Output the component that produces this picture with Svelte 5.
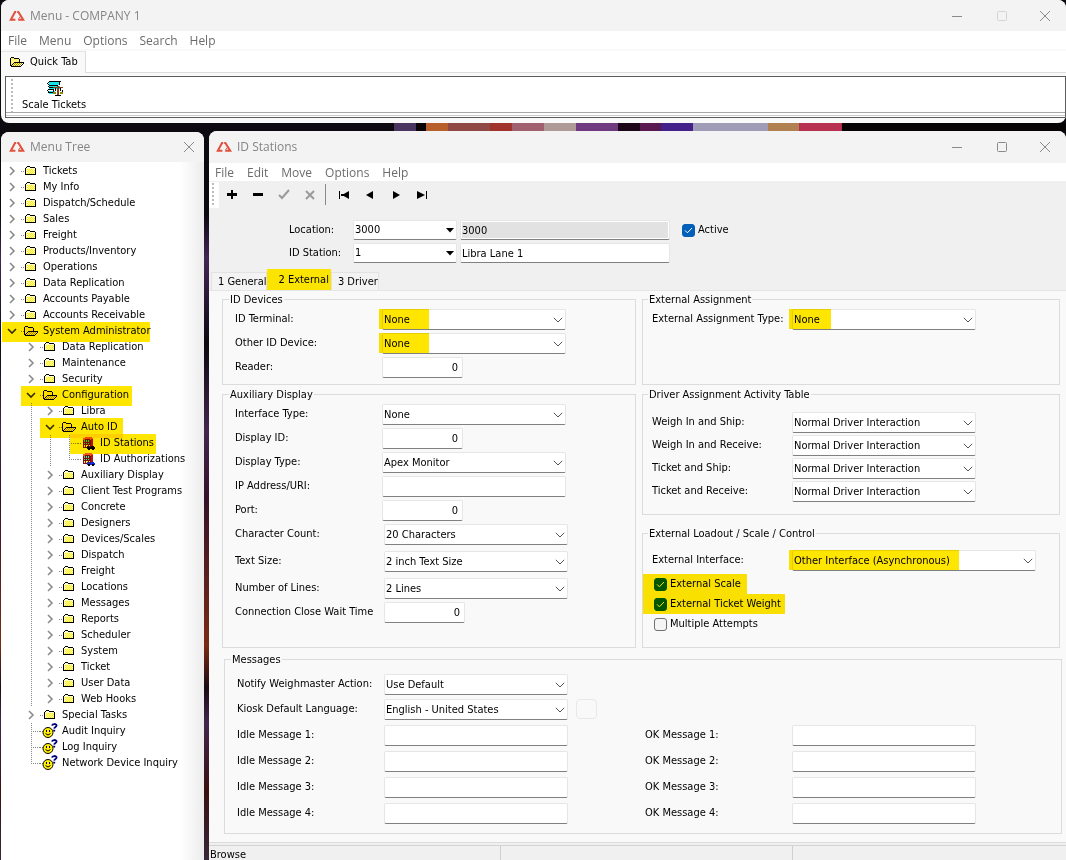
<script lang="ts">
  type Node = {
    label: string;
    level: number;
    kind: "closed" | "open" | "station" | "auth" | "inquiry";
    mark?: number;
    last?: boolean;
  };

  const closed = (level: number, names: string[]): Node[] =>
    names.map((label) => ({ label, level, kind: "closed" }));

  const tree: Node[] = [
    ...closed(0, [
      "Tickets",
      "My Info",
      "Dispatch/Schedule",
      "Sales",
      "Freight",
      "Products/Inventory",
      "Operations",
      "Data Replication",
      "Accounts Payable",
      "Accounts Receivable",
    ]),
    { label: "System Administrator", level: 0, kind: "open", mark: 148 },
    ...closed(1, ["Data Replication", "Maintenance", "Security"]),
    { label: "Configuration", level: 1, kind: "open", mark: 111 },
    ...closed(2, ["Libra"]),
    { label: "Auto ID", level: 2, kind: "open", mark: 83 },
    { label: "ID Stations", level: 3, kind: "station", mark: 86 },
    { label: "ID Authorizations", level: 3, kind: "auth", last: true },
    ...closed(2, [
      "Auxiliary Display",
      "Client Test Programs",
      "Concrete",
      "Designers",
      "Devices/Scales",
      "Dispatch",
      "Freight",
      "Locations",
      "Messages",
      "Reports",
      "Scheduler",
      "System",
      "Ticket",
      "User Data",
      "Web Hooks",
    ]),
    ...closed(1, ["Special Tasks"]),
    { label: "Audit Inquiry", level: 1, kind: "inquiry" },
    { label: "Log Inquiry", level: 1, kind: "inquiry" },
    { label: "Network Device Inquiry", level: 1, kind: "inquiry", last: true },
  ];

  const driverRows = [
    "Weigh In and Ship:",
    "Weigh In and Receive:",
    "Ticket and Ship:",
    "Ticket and Receive:",
  ];

  const isFolder = (n: Node) => n.kind === "closed" || n.kind === "open";
</script>

{#snippet logo()}
  <svg class="logo" width="16" height="12" viewBox="0 0 16 12" fill="none" stroke="#e2503c" stroke-width="2">
    <path d="M7.2 2H6L1.8 9.8H6.4" />
    <path d="M8.2 2h1.2l4.8 7.8H9.2" />
    <path d="M11.4 6.4 9.6 8.8" stroke-width="1" />
  </svg>
{/snippet}

{#snippet chevron()}
  <svg class="arrow" width="10" height="6" viewBox="0 0 10 6" fill="none" stroke="#555" stroke-width="1">
    <path d="M.8.8 5 5 9.2.8" />
  </svg>
{/snippet}

{#snippet icon(kind: string)}
  {#if kind === "closed"}
    <svg width="12" height="12" viewBox="0 0 12 12" shape-rendering="crispEdges">
      <path d="M1 3h9v6H1zM2 2h3v1H2z" fill="#fffdc4" />
      <path d="M2 4h1v1H2zM4 4h1v1H4zM6 4h1v1H6zM8 4h1v1H8zM3 5h1v1H3zM5 5h1v1H5zM7 5h1v1H7zM9 5h1v1H9zM2 6h1v1H2zM4 6h1v1H4zM6 6h1v1H6zM8 6h1v1H8zM3 7h1v1H3zM5 7h1v1H5zM7 7h1v1H7zM9 7h1v1H9zM2 8h1v1H2zM4 8h1v1H4zM6 8h1v1H6zM8 8h1v1H8z" fill="#fff000" />
      <path d="M2 1h3v1H2zM1 2h1v1H1zM5 2h5v1H5zM0 3h1v6H0zM10 3h1v6h-1zM0 9h11v1H0z" fill="#000" />
    </svg>
  {:else if kind === "open"}
    <svg width="15" height="12" viewBox="0 0 15 12" shape-rendering="crispEdges">
      <path d="M1 2h3v1h5v3h4l-3 4H1z" fill="#fff27a" />
      <path d="M5 7h1v1H5zM7 7h1v1H7zM9 7h1v1H9zM11 7h1v1h-1zM4 8h1v1H4zM6 8h1v1H6zM8 8h1v1H8zM10 8h1v1h-1zM3 9h1v1H3zM5 9h1v1H5zM7 9h1v1H7zM9 9h1v1H9z" fill="#b0a000" />
      <path d="M1 1h3v1H1zM0 2h1v8H0zM4 2h1v1H4zM5 2h4v1H5zM9 3h1v3H9zM4 6h10v1H4zM3 7h1v1H3zM2 8h1v1H2zM1 9h1v1H1zM13 7h1v1h-1zM12 8h1v1h-1zM11 9h1v1h-1zM1 10h10v1H1z" fill="#000" />
    </svg>
  {:else if kind === "inquiry"}
    <svg width="16" height="16" viewBox="0 0 16 16">
      <circle cx="6" cy="9.5" r="5" fill="#ffee00" stroke="#000" />
      <path d="M4 7h1v2H4zM7 7h1v2H7z" fill="#000" />
      <path d="M3.5 10.5q2.5 3 5 0" fill="none" stroke="#000" />
      <path d="M10 2.6C10.4.6 14.6.4 14.6 2.6 14.6 4 12.4 3.8 12.2 5.6M11.2 7.6h2" fill="none" stroke="#00007c" stroke-width="1.8" />
    </svg>
  {:else}
    <svg width="14" height="14" viewBox="0 0 14 14" shape-rendering="crispEdges">
      <path d="M1 3h10v9H1z" fill="#7e0f0a" />
      <path d="M3 1h7v1h1v2H8V3H3v1H1V2h2z" fill="#ef5a1c" />
      <path d="M9 3h2v7H9z" fill="#b5150e" />
      <path d="M2 4h1v2H2zM4 4h1v2H4zM6 4h1v2H6zM2 7h1v1H2zM4 7h1v1H4zM6 7h1v1H6z" fill="#35e6a8" />
      <path d="M2 9h1v2H2zM4 9h2v2H4zM7 9h1v1H7z" fill="#fff34d" />
      <path d="M5 10h2v1h2v-1h3v1h1v2H5z" fill={kind === "auth" ? "#0a2ee8" : "#0b0b0b"} />
      <path d="M6 12h2v2H6zM10 12h2v2h-2z" fill="#000" />
    </svg>
  {/if}
{/snippet}

{#snippet combo(id: string, value: string, mark = 0, wide = false)}
  <span class="combo" class:wide>
    <select {id}><option>{value}</option></select>
    {@render chevron()}
    {#if mark}<span class="mark" style="width: {mark}px"></span>{/if}
  </span>
{/snippet}

{#snippet comboRow(label: string, value: string, pitch = "p24", mark = 0, wide = false)}
  {@const id = label.toLowerCase().replace(/[^a-z0-9]+/g, "-")}
  <div class="row {pitch}">
    <label for={id}>{label}</label>
    {@render combo(id, value, mark, wide)}
  </div>
{/snippet}

{#snippet textRow(label: string, value: string, pitch = "p24", numeric = false)}
  {@const id = label.toLowerCase().replace(/[^a-z0-9]+/g, "-")}
  <div class="row {pitch}">
    <label for={id}>{label}</label>
    <input {id} class="text" class:numeric type="text" {value} />
  </div>
{/snippet}

{#snippet check(label: string, checked: boolean, mark = 0)}
  <label class="check">
    <input type="checkbox" {checked} />
    {#if checked}
      <svg class="tick" width="9" height="7" viewBox="0 0 9 7" fill="none" stroke="#fff">
        <path d="M1 3.4 3.4 5.8 8 1" />
      </svg>
    {/if}
    <span>{label}</span>
    {#if mark}<span class="mark" style="width: {mark}px"></span>{/if}
  </label>
{/snippet}

{#snippet windowButtons(dim: boolean)}
  <div class="window-buttons">
    <button aria-label="Minimize">
      <svg width="12" height="12" viewBox="0 0 12 12" fill="none" stroke="#8a8a8a"><path d="M1 6.5h10" /></svg>
    </button>
    <button aria-label="Maximize">
      <svg width="12" height="12" viewBox="0 0 12 12" fill="none" stroke={dim ? "#d4d4d4" : "#8a8a8a"}>
        <rect x="1.5" y="1.5" width="9" height="9" rx="1" />
      </svg>
    </button>
    <button aria-label="Close">
      <svg width="12" height="12" viewBox="0 0 12 12" fill="none" stroke="#8a8a8a"><path d="m1 1 10 10M11 1 1 11" /></svg>
    </button>
  </div>
{/snippet}

<div class="desktop">
  <section class="window main">
    <header class="title">
      {@render logo()}
      <span>Menu - COMPANY 1</span>
      {@render windowButtons(true)}
    </header>
    <nav class="menu">
      <button>File</button>
      <button>Menu</button>
      <button>Options</button>
      <button>Search</button>
      <button>Help</button>
    </nav>
    <div class="quick-tabs">
      <button class="quick-tab">
        {@render icon("open")}
        Quick Tab
      </button>
      <div class="filler"></div>
    </div>
    <div class="quick-bar">
      <span class="grip"></span>
      <button class="shortcut">
        <svg width="17" height="16" viewBox="0 0 17 16" shape-rendering="crispEdges">
          <path d="M3 1h11v3H3zM3 5h11v3H3zM3 10h6v3H3z" fill="#18e4ec" />
          <path d="M3 0h12v1H3zM2 1h1v1H2zM1 2h1v1H1zM2 3h1v1H2zM3 4h9v1H3zM2 5h1v1H2zM3 6h5v1H3zM2 8h6v1H2zM1 9h1v1H1zM2 10h1v2H2zM3 11h4v1H3zM13 1h1v3h-1z" fill="#000" />
          <path d="M7 6h10v1H7zM11 5h2v9h-2z" fill="#8a3d10" />
          <path d="M9 7h1v3H9zM14 7h1v3h-1zM7 9h1v2H7zM16 9h1v2h-1zM9 14h6v1H9z" fill="#000" />
          <path d="M7 11h3v2H7zM14 11h3v2h-3z" fill="#8a8a10" />
        </svg>
        Scale Tickets
      </button>
    </div>
  </section>

  <div class="lower">
    <aside class="window tree-window">
      <header class="title">
        {@render logo()}
        <span>Menu Tree</span>
        <button class="close" aria-label="Close">
          <svg width="12" height="12" viewBox="0 0 12 12" fill="none" stroke="#8a8a8a"><path d="m1 1 10 10M11 1 1 11" /></svg>
        </button>
      </header>
      <ul class="tree">
        {#each tree as node}
          <li>
            {#each Array(node.level) as _, i}
              <span class="guide" class:line={i > 0}></span>
            {/each}
            <span class="item" class:leaf={!isFolder(node)}>
              {#if isFolder(node)}
                <span class="guide toggle">
                  <svg width="10" height="10" viewBox="0 0 10 10" fill="none" stroke={node.kind === "open" ? "#333" : "#8c8c8c"} stroke-width="1.6">
                    <path d={node.kind === "open" ? "M1 3l4 4 4-4" : "M3 1l4 4-4 4"} />
                  </svg>
                </span>
              {:else}
                <span class="guide tee" class:last={node.last}></span>
              {/if}
              <span class="picture {node.kind}">{@render icon(node.kind)}</span>
              <span class="name">{node.label}</span>
              {#if node.mark}<span class="mark" style="width: {node.mark}px"></span>{/if}
            </span>
          </li>
        {/each}
      </ul>
    </aside>

    <main class="window stations">
      <header class="title">
        {@render logo()}
        <span>ID Stations</span>
        {@render windowButtons(false)}
      </header>
      <nav class="menu">
        <button>File</button>
        <button>Edit</button>
        <button>Move</button>
        <button>Options</button>
        <button>Help</button>
      </nav>
      <div class="toolbar">
        <span class="grip"></span>
        <button aria-label="Add"><svg width="12" height="12" viewBox="0 0 12 12" shape-rendering="crispEdges"><path d="M5 1h2v3h4v3H7v3H5V7H1V4h4z" /></svg></button>
        <button aria-label="Delete"><svg width="12" height="12" viewBox="0 0 12 12" shape-rendering="crispEdges"><path d="M1 4h10v3H1z" /></svg></button>
        <button aria-label="Save"><svg width="12" height="12" viewBox="0 0 12 12" fill="none" stroke="#9a9a9a" stroke-width="2"><path d="M1 6 4 9l7-8" /></svg></button>
        <button aria-label="Cancel"><svg width="12" height="12" viewBox="0 0 12 12" fill="none" stroke="#9a9a9a" stroke-width="2"><path d="m2 2 8 8M10 2l-8 8" /></svg></button>
        <span class="divider"></span>
        <button aria-label="First"><svg width="12" height="12" viewBox="0 0 12 12"><path d="M1 2h1v8H1zM3 5h3v2H3zM11 2v8L4 6z" /></svg></button>
        <button aria-label="Previous"><svg width="12" height="12" viewBox="0 0 12 12"><path d="M9 2v8L2 6z" /></svg></button>
        <button aria-label="Next"><svg width="12" height="12" viewBox="0 0 12 12"><path d="M3 2v8l7-4z" /></svg></button>
        <button aria-label="Last"><svg width="12" height="12" viewBox="0 0 12 12"><path d="M1 2v8l8-4zM10 2h1v8h-1z" /></svg></button>
      </div>

      <div class="keys">
        <div class="key-fields">
          <label for="location">Location:</label>
          <span class="combo key">
            <select id="location"><option>3000</option></select>
            <svg class="arrow" width="8" height="5" viewBox="0 0 8 5"><path d="M0 0h8L4 4.5z" /></svg>
          </span>
          <input class="text shaded" type="text" value="3000" readonly aria-label="Location name" />
          <label for="station">ID Station:</label>
          <span class="combo key">
            <select id="station"><option>1</option></select>
            <svg class="arrow" width="8" height="5" viewBox="0 0 8 5"><path d="M0 0h8L4 4.5z" /></svg>
          </span>
          <input class="text" type="text" value="Libra Lane 1" aria-label="ID Station name" />
        </div>
        {@render check("Active", true)}
      </div>

      <div class="tabs" role="tablist">
        <button role="tab" aria-selected="false">1 General</button>
        <button role="tab" aria-selected="true" class="current">2 External</button>
        <button role="tab" aria-selected="false">3 Driver</button>
      </div>

      <div class="panel">
        <div class="columns">
          <div class="column">
            <fieldset>
              <legend>ID Devices</legend>
              {@render comboRow("ID Terminal:", "None", "p24", 50)}
              {@render comboRow("Other ID Device:", "None", "p24", 50)}
              {@render textRow("Reader:", "0", "p24", true)}
            </fieldset>
            <fieldset class="auxiliary">
              <legend>Auxiliary Display</legend>
              {@render comboRow("Interface Type:", "None")}
              {@render textRow("Display ID:", "0", "p24", true)}
              {@render comboRow("Display Type:", "Apex Monitor")}
              {@render textRow("IP Address/URI:", "")}
              {@render textRow("Port:", "0", "p24", true)}
              {@render comboRow("Character Count:", "20 Characters", "p27 inset")}
              {@render comboRow("Text Size:", "2 inch Text Size", "p27 inset")}
              {@render comboRow("Number of Lines:", "2 Lines", "p24 inset")}
              {@render textRow("Connection Close Wait Time", "0", "p24 inset", true)}
            </fieldset>
          </div>
          <div class="column right">
            <fieldset class="assignment">
              <legend>External Assignment</legend>
              {@render comboRow("External Assignment Type:", "None", "p24", 42)}
            </fieldset>
            <fieldset class="driver">
              <legend>Driver Assignment Activity Table</legend>
              {#each driverRows as label}
                {@render comboRow(label, "Normal Driver Interaction", "p23")}
              {/each}
            </fieldset>
            <fieldset class="loadout">
              <legend>External Loadout / Scale / Control</legend>
              {@render comboRow("External Interface:", "Other Interface (Asynchronous)", "p24", 170, true)}
              {@render check("External Scale", true, 104)}
              {@render check("External Ticket Weight", true, 142)}
              {@render check("Multiple Attempts", false)}
            </fieldset>
          </div>
        </div>

        <fieldset class="messages">
          <legend>Messages</legend>
          <div class="message-grid">
            <div>
              {@render comboRow("Notify Weighmaster Action:", "Use Default", "p25")}
              <div class="language">
                {@render comboRow("Kiosk Default Language:", "English - United States", "p26")}
                <button class="blank" aria-label="Edit language"></button>
              </div>
              {#each [1, 2, 3, 4] as n}
                {@render textRow(`Idle Message ${n}:`, "", "p26")}
              {/each}
            </div>
            <div class="ok">
              {#each [1, 2, 3, 4] as n}
                {@render textRow(`OK Message ${n}:`, "", "p26")}
              {/each}
            </div>
          </div>
        </fieldset>
      </div>

      <footer class="status">
        <span>Browse</span>
        <span></span>
        <span></span>
      </footer>
    </main>
  </div>
</div>

<style>
  :global(body) {
    background: #0d0910;
  }
  .desktop,
  .desktop * {
    box-sizing: border-box;
  }
  .desktop {
    display: flex;
    flex-direction: column;
    gap: 8px;
    min-height: 100vh;
    padding-left: 1px;
    font-family: "DejaVu Sans Condensed", Tahoma, sans-serif;
    font-size: 11px;
    line-height: 16px;
    color: #000;
    background:
      linear-gradient(90deg, #0d0910 37%, #4a3560 37% 39%, #0b0508 39% 40%, #b8602c 40% 42%, #8f4a46 42% 46%, #a0342c 46% 48%, #a06070 48% 51%, #b09a98 51% 54%, #6f3a80 54% 58%, #1c0618 58% 60%, #5a1850 60% 62%, #43208a 62% 65%, #a09cb8 65% 72%, #b08050 72% 75%, #b83050 75% 79%, #050304 79%) 0 123px / 100% 8px no-repeat,
      linear-gradient(#0d0910 25%, #432656 30%, #0d0910 40%, #43264e 50%, #35122a 58%, #7a2a14 75%, #1a0c14 80%, #43264e 84%, #3a1010 92%, #38283a);
  }
  button {
    padding: 0;
    border: 0;
    background: none;
    color: inherit;
    font: inherit;
    line-height: inherit;
  }
  svg {
    display: block;
    flex: none;
  }

  .window {
    display: flex;
    flex-direction: column;
    min-width: 0;
    overflow: hidden;
    background: #f9f9f9;
    border-radius: 8px 8px 0 0;
  }
  .title {
    display: flex;
    align-items: center;
    gap: 5px;
    height: 31px;
    padding-left: 8px;
    background: #f3f3f3;
    color: #858585;
    font-family: "Open Sans", "Segoe UI", sans-serif;
    font-size: 12px;
  }
  .window-buttons {
    display: flex;
    margin-left: auto;
  }
  .window-buttons button {
    display: flex;
    justify-content: center;
    width: 45px;
  }
  .window-buttons button:last-child {
    width: 42px;
  }
  .menu {
    display: flex;
    gap: 12px;
    padding: 2px 7px 0;
    background: #fff;
    color: #6c6c6c;
    font-family: "Open Sans", "Segoe UI", sans-serif;
    font-size: 12px;
  }
  .grip {
    width: 2px;
    background: repeating-linear-gradient(#bdbdbd 0 2px, #fff 2px 4px);
  }

  .main {
    border-radius: 8px;
    height: 123px;
  }
  .quick-tabs {
    display: flex;
    height: 22px;
    margin-top: 2px;
  }
  .quick-tab {
    display: flex;
    align-items: center;
    gap: 5px;
    padding: 0 7px 2px 9px;
    border-right: 1px solid #ddd;
    border-top: 1px solid #e5e5e5;
  }
  .filler {
    flex: 1;
    background: #fff;
    border-bottom: 1px solid #ddd;
  }
  .quick-bar {
    display: flex;
    gap: 9px;
    height: 42px;
    margin: 3px 0 0 4px;
    padding: 2px 0 5px 5px;
    border: 1px solid #5c5c5c;
    background: linear-gradient(#fff 35px, #a8a8a8 35px 36px, #fff 36px 38px, #ccc 38px 39px, #fff 39px);
  }
  .shortcut {
    display: flex;
    flex-direction: column;
    align-items: center;
    padding-top: 2px;
  }

  .lower {
    display: grid;
    grid-template-columns: 203px 1fr;
    gap: 5px;
    flex: 1;
  }
  .tree-window {
    margin-top: 1px;
    background: linear-gradient(90deg, #fff 88%, #ececec);
  }
  .tree-window .title {
    height: 30px;
  }
  .close {
    margin-left: auto;
    margin-right: 9px;
  }
  .tree {
    margin: 0;
    padding: 1px 0 0 1px;
    list-style: none;
  }
  .tree li,
  .item {
    display: flex;
    height: 16px;
    white-space: nowrap;
  }
  .item {
    position: relative;
  }
  .guide {
    flex: none;
    width: 19px;
    height: 16px;
  }
  .toggle {
    display: flex;
    align-items: center;
    padding-left: 5px;
  }
  .line,
  .tee {
    background: repeating-linear-gradient(#888 0 1px, transparent 1px 2px) 10px 0 / 1px 100% no-repeat;
  }
  .tee {
    background:
      repeating-linear-gradient(#888 0 1px, transparent 1px 2px) 10px 0 / 1px 100% no-repeat,
      repeating-linear-gradient(90deg, #888 0 1px, transparent 1px 2px) 10px 8px / 9px 1px no-repeat;
  }
  .tee.last {
    background:
      repeating-linear-gradient(#888 0 1px, transparent 1px 2px) 10px 0 / 1px 9px no-repeat,
      repeating-linear-gradient(90deg, #888 0 1px, transparent 1px 2px) 10px 8px / 9px 1px no-repeat;
  }
  .picture {
    display: flex;
    align-items: center;
    flex: none;
    width: 22px;
    padding-left: 4px;
    background: repeating-linear-gradient(90deg, #888 0 1px, transparent 1px 2px) 0 8px / 4px 1px no-repeat;
  }
  .picture.open {
    padding-left: 3px;
  }
  .picture.inquiry {
    padding-left: 2px;
  }
  .mark {
    position: absolute;
    top: -1px;
    left: 0;
    height: 20px;
    background: #ffe600;
    mix-blend-mode: multiply;
    pointer-events: none;
  }
  .leaf .mark {
    left: 11px;
  }

  .stations .title {
    height: 32px;
    padding-left: 7px;
  }
  .stations .menu {
    gap: 13px;
    padding: 2px 6px 0;
  }
  .toolbar {
    display: flex;
    align-items: center;
    height: 27px;
    background: #f0f0f0;
  }
  .toolbar .grip {
    width: 10px;
    height: 26px;
    background: repeating-linear-gradient(#bdbdbd 0 2px, #fff 2px 4px) 3px 1px / 2px 24px no-repeat #fff;
  }
  .toolbar button {
    display: flex;
    justify-content: center;
    width: 26px;
  }
  .divider {
    width: 1px;
    height: 21px;
    margin: 0 5px 0 2px;
    background: #8a8a8a;
  }

  .keys {
    display: flex;
    gap: 12px;
    padding: 12px 0 6px 80px;
    background: #f0f0f0;
  }
  .key-fields {
    display: grid;
    grid-template-columns: 61px 104px 210px;
    gap: 3px;
  }
  .key-fields label {
    line-height: 20px;
  }
  .tabs {
    display: flex;
    align-items: flex-end;
    height: 21px;
    padding-left: 2px;
    background: #f0f0f0;
  }
  .tabs button {
    height: 18px;
    padding: 0 0 0 6px;
    border: 1px solid #e2e2e2;
    border-bottom: 0;
    background: #f3f3f3;
  }
  .tabs .current {
    height: 21px;
    padding: 0 2px 0 11px;
    border: 0;
    background: #fbe500;
  }

  .panel {
    flex: 1;
    padding: 2px 4px 8px 13px;
    border-top: 1px solid #e5e5e5;
    background: #f9f9f9;
  }
  .columns {
    display: grid;
    grid-template-columns: 414fr 418fr;
    gap: 6px;
    margin-right: 2px;
  }
  .column {
    display: flex;
    flex-direction: column;
    gap: 3px;
  }
  fieldset {
    min-width: 0;
    margin: 0;
    padding: 3px 12px 3px;
    border: 1px solid #dcdcdc;
  }
  legend {
    margin-left: -6px;
    padding: 0 1px;
    line-height: 13px;
  }
  .auxiliary {
    flex: 1;
    padding-bottom: 21px;
  }
  .right fieldset {
    padding-left: 9px;
  }
  .right legend {
    margin-left: -4px;
  }
  .right .assignment {
    height: 92px;
  }
  .right .driver {
    padding-top: 11px;
    padding-bottom: 10px;
  }
  .right .loadout {
    flex: 1;
    margin-top: 9px;
    padding-top: 10px;
  }

  .row {
    display: grid;
    grid-template-columns: 147px auto;
    justify-content: start;
  }
  .row.inset {
    grid-template-columns: 149px auto;
  }
  .right .row {
    grid-template-columns: 140px auto;
  }
  .row label {
    line-height: 20px;
    white-space: nowrap;
  }
  .p23 {
    height: 23px;
  }
  .p24 {
    height: 24px;
  }
  .p25 {
    height: 25px;
  }
  .p26 {
    height: 26px;
  }
  .p27 {
    height: 27px;
  }

  .combo {
    position: relative;
    display: block;
    width: 184px;
    height: 21px;
  }
  .combo.wide {
    width: 244px;
  }
  .combo.key,
  .key-fields .text {
    width: 100%;
    height: 20px;
  }
  select,
  .text {
    appearance: none;
    width: 100%;
    height: 100%;
    margin: 0;
    padding: 0 1px;
    border: 1px solid #e6e6e6;
    border-bottom-color: #808080;
    border-radius: 2px;
    outline: 0;
    background: #fff;
    color: #000;
    font: inherit;
  }
  .text {
    width: 184px;
    height: 21px;
  }
  .text.numeric {
    width: 81px;
    padding-right: 4px;
    text-align: right;
  }
  .text.shaded {
    background: #e2e2e2;
    box-shadow: inset 0 0 0 1px #fff;
  }
  .combo .arrow {
    position: absolute;
    top: 8px;
    right: 3px;
    pointer-events: none;
  }
  .combo .mark {
    top: 0;
    left: -3px;
  }

  .check {
    position: relative;
    display: flex;
    align-items: center;
    gap: 3px;
    height: 20px;
    padding-left: 2px;
  }
  .check input {
    appearance: none;
    width: 13px;
    height: 13px;
    margin: 0;
    border: 1px solid #707070;
    border-radius: 3px;
    background: #f5f5f5;
  }
  .check input:checked {
    border-color: #005fb8;
    background: #005fb8;
  }
  .check .tick {
    position: absolute;
    top: 7px;
    left: 4px;
    pointer-events: none;
  }
  .check .mark {
    top: 0;
    left: -9px;
  }
  .keys .check {
    padding-left: 0;
  }
  .keys .tick {
    left: 2px;
  }

  .messages {
    margin: 5px 0 0 2px;
    padding-bottom: 4px;
    padding-top: 8px;
  }
  .message-grid {
    display: grid;
    grid-template-columns: 408fr 404fr;
  }
  .ok {
    padding-top: 51px;
  }
  .language {
    display: flex;
    gap: 8px;
  }
  .blank {
    width: 21px;
    height: 20px;
    border: 1px solid #e8e8e8;
    border-radius: 4px;
  }

  .status {
    display: grid;
    grid-template-columns: 291fr 292fr 274fr;
    height: 18px;
    padding: 2px 0 0;
    border-top: 1px solid #dcdcdc;
    background: #f0f0f0;
    line-height: 18px;
  }
  .status span {
    height: 16px;
    padding-left: 1px;
    border-top: 1px solid #d4d4d4;
    overflow: hidden;
  }
  .status span + span {
    border-left: 1px solid #d0d0d0;
  }
</style>
